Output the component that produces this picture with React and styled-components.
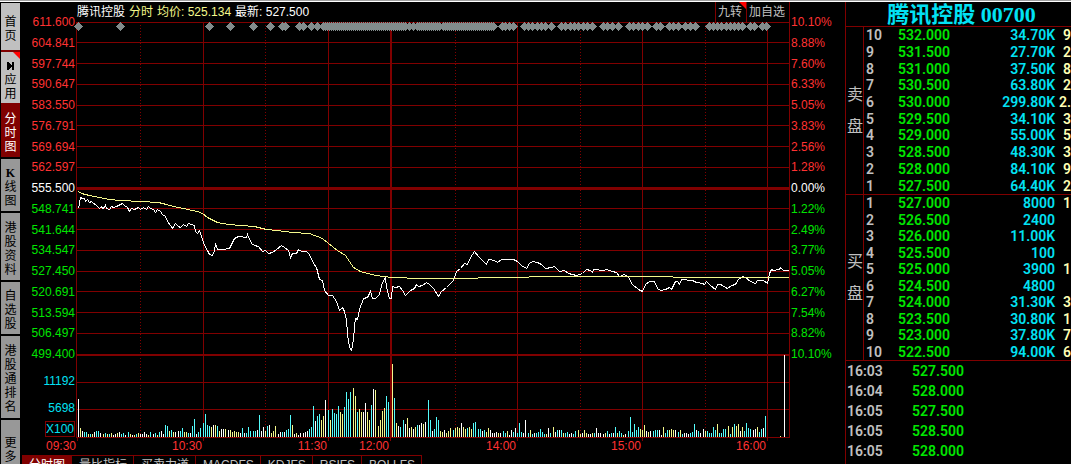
//Global imports
import React from 'react'
import styled, { createGlobalStyle } from 'styled-components'

const SANS = `"Liberation Sans", "Noto Sans CJK SC", sans-serif`
const SERIF = `"Liberation Serif", "Noto Sans CJK SC", serif`
const NUMERIC = `Roboto, "Noto Sans CJK SC", sans-serif`

const color = {
    line: '#800000',
    up: '#ff3232',
    down: '#00e600',
    flat: '#ffffff',
    cyan: '#02e2f4',
    grey: '#c0c0c0',
    yellow: '#f4f88c',
    aqua: '#54fcfc',
    marker: '#828c8c',
}

/* ---------- data ---------- */

const SIDE_TABS = [
    { id: 'home', label: '首页', height: 49, tone: 'light' },
    { id: 'apps', label: '应用', height: 53, tone: 'light', icon: true, corner: true },
    { id: 'minute', label: '分时图', height: 54, tone: 'active' },
    { id: 'kline', label: '线图', lead: 'K', height: 54, tone: 'dark' },
    { id: 'info', label: '港股资料', height: 69, tone: 'dark' },
    { id: 'watch', label: '自选股', height: 54, tone: 'dark' },
    { id: 'rank', label: '港股通排名', height: 84, tone: 'dark' },
    { id: 'more', label: '更多', height: 58, tone: 'dark' },
]

const PRICES = [
    '611.600', '604.841', '597.744', '590.647', '583.550', '576.791', '569.694', '562.597', '555.500',
    '548.741', '541.644', '534.547', '527.450', '520.691', '513.594', '506.497', '499.400',
]

const PERCENTS = [
    '10.10%', '8.88%', '7.60%', '6.33%', '5.05%', '3.83%', '2.56%', '1.28%', '0.00%',
    '1.22%', '2.49%', '3.77%', '5.05%', '6.27%', '7.54%', '8.82%', '10.10%',
]

const TIMES = ['09:30', '10:30', '11:30', '12:00', '14:00', '15:00', '16:00']

const INDICATORS = ['分时图', '量比指标', '买卖力道', 'MACDFS', 'KDJFS', 'RSIFS', 'BOLLFS']

const SELL = [
    ['10', '532.000', '34.70K', '9'],
    ['9', '531.500', '27.70K', '2'],
    ['8', '531.000', '37.50K', '8'],
    ['7', '530.500', '63.80K', '2'],
    ['6', '530.000', '299.80K', '2.'],
    ['5', '529.500', '34.10K', '3'],
    ['4', '529.000', '55.00K', '5'],
    ['3', '528.500', '48.30K', '3'],
    ['2', '528.000', '84.10K', '9'],
    ['1', '527.500', '64.40K', '2'],
]

const BUY = [
    ['1', '527.000', '8000', '1'],
    ['2', '526.500', '2400', ''],
    ['3', '526.000', '11.00K', ''],
    ['4', '525.500', '100', ''],
    ['5', '525.000', '3900', '1'],
    ['6', '524.500', '4800', ''],
    ['7', '524.000', '31.30K', '3'],
    ['8', '523.500', '30.80K', '1'],
    ['9', '523.000', '37.80K', '7'],
    ['10', '522.500', '94.00K', '6'],
]

const TICKS = [
    ['16:03', '527.500'],
    ['16:04', '528.000'],
    ['16:05', '527.500'],
    ['16:05', '528.500'],
    ['16:05', '528.000'],
]

// chart space: x 76..790, y 22..438
const ROWS = [42, 63, 84, 105, 125, 146, 167, 208, 229, 250, 271, 291, 312, 333, 382, 409]
const HOURS = [203, 328, 517, 642, 767]
const HALF_HOURS = [140, 265, 455, 580, 705]

const PRICE_LINE = `78,208 80,197 82,198 84,198 85,201 87,199 89,202 91,201 93,203 95,204 98,207 99,208 101,206
102,208 104,207 105,205 106,208 109,209 111,206 113,207 116,206 120,204 122,203 124,205 127,207 129,211 131,208
134,209 136,208 138,207 140,209 143,207 146,209 148,206 150,208 153,209 155,212 157,209 160,211 162,214 165,216
167,221 170,225 172,228 175,223 178,226 180,227 183,224 186,226 188,223 191,224 194,225 195,231 197,233 199,230
201,236 203,242 205,247 207,250 209,254 212,255 214,250 215,243 217,249 222,249 229,248 234,238 238,236 246,237
247,234 251,243 254,245 258,246 262,251 265,250 268,253 272,252 276,249 281,245 284,247 288,250 290,257 292,253
296,253 298,249 301,251 306,251 309,254 313,263 316,267 319,279 322,280 324,290 328,295 332,295 336,301 339,310
342,307 344,311 346,320 347,332 348,342 350,349 351,350 353,339 354,326 355,318 357,319 359,309 363,298 367,297
370,291 372,298 375,298 379,294 382,282 385,277 386,287 389,298 391,298 392,286 395,287 399,286 402,290 405,295
410,290 414,288 416,284 418,286 422,285 426,282 429,284 433,288 438,296 441,291 446,287 449,284 453,280 456,271
460,268 464,263 467,264 470,257 474,251 478,256 482,260 486,264 488,259 494,260 497,262 501,259 513,259 517,261
521,265 526,268 529,263 532,261 537,262 541,264 545,268 551,267 554,266 559,271 564,270 568,273 576,275 582,273
586,269 590,270 592,272 593,269 603,270 606,269 612,271 616,272 619,276 624,274 628,277 632,284 638,289 642,291
645,284 649,281 654,281 657,288 660,290 665,289 669,287 671,289 675,281 677,281 679,284 681,279 692,280 696,282
702,283 704,284 706,281 710,285 715,289 717,284 720,284 727,288 731,285 735,284 738,279 742,276 745,277 750,281
755,283 757,280 763,280 767,283 769,273 771,269 773,270 779,269 780,267 783,270 788,270`

const AVERAGE_LINE = `78,191 81,193 89,195 99,197 109,199 120,200 140,201 158,202 166,204 173,206 183,208 192,210
197,211 202,213 207,217 217,222 228,224 254,226 266,229 276,230 292,232 309,233 322,238 328,243 337,250 345,255
349,261 353,267 360,271 375,275 392,277 420,278 477,278 478,277 528,277 529,276 672,276 673,277 788,277`

// one entry a minute: bar height and its colour (w, y or c)
const VOLUME = `38w 9y 6w 5c 5c 3y 3c 3y 5w 6c 6c 4w 3y 4c 3y 3c 4y 2w 3w 4y 5w 3c 4c 2w 5c 3y 2w 2y 3c 4y
3w 3w 5w 3w 2y 5c 3w 4c 2y 5c 6w 3w 12c 11c 6y 7c 5y 5w 6w 6c 9c 5y 5y 4c 4w 11c 18c 3w 5c 9c
14c 23c 12c 11c 10y 12w 12y 11c 6y 8w 8w 8y 7w 7y 5y 6y 5y 5y 4w 9c 4w 4c 10c 6c 6c 6c 7w 22c 6w 10w
6y 11c 12w 4y 6y 11y 3w 5w 5c 5w 7c 8c 22c 12y 3w 4y 2w 4w 4w 5w 6w 8c 10c 31c 16w 21c 23c 17y 21y 37w
27c 17y 28c 24c 23c 31c 25y 23y 30c 45c 38c 45c 49y 41y 25c 28y 25y 25w 34w 25y 17y 32c 48w 47y 11y 17y 26y 29y 41c 35c
0w 73y 39c 14y 11w 10c 17c 13w 19y 9w 10y 8w 10y 12c 12w 14w 13y 15w 37c 17c 6w 8c 20c 17c 6y 5y 7w 4y 6y 9y
7c 9y 10y 9y 14w 10y 8y 9c 10y 8y 14c 15c 8c 8c 6w 7c 5y 9y 7w 4w 4w 5w 4y 4w 6c 4c 6y 2w 7w 5c
9w 4c 14c 5c 4w 17w 4c 7y 3c 4w 4c 5c 8c 5c 3c 3y 9w 4c 10y 5w 7c 7w 7c 4y 4c 5c 3w 4w 3c 6c
7y 3y 4w 7y 4y 3w 3w 4y 4c 9w 4w 4w 3w 4y 6c 3w 4c 4w 10c 4y 6c 4c 2y 3w 6c 20c 5c 13c 7c 10c
8y 7y 12y 6w 5y 6w 6c 7c 7c 7w 2w 10y 4c 7c 7y 8y 7y 7w 5c 7y 3c 4w 4w 3w 4c 5c 13c 7w 6c 4w
8w 6y 6c 4c 4c 10c 7c 13y 4c 4c 8c 8c 11y 3c 10y 13c 11y 13y 6w 10y 6c 14c 9c 8c 7w 8w 10y 5c 8c 9w
21c`.split(/\s+/)

const range = (from, to, step) => {
    const out = []
    for (let x = from; x <= to; x += step) out.push(x)
    return out
}

const MARKERS = [
    78, 120, 209, 230, 253, 270, 282, 285, 299, 303, 311, 317,
    ...range(323, 405, 2), 409, 413, ...range(417, 439, 2), ...range(443, 493, 2), 502, 505, 509, 513,
    524, 528, 532, 537, 541, 545, 551, 561, 565, 570, 574, 578, 583, 587, 592, 603, 607, 612, 618,
    629, 633, 638, 642, 647, 656, 660, 669, 673, 678, 685, 690, 695,
    709, 713, 717, 721, 726, 730, 734, 738, 742, 750, 754, 762, 766,
]

/* ---------- styles ---------- */

const GlobalStyle = createGlobalStyle`
    * {
        box-sizing: border-box;
    }
    body {
        margin: 0;
        background: #000;
        overflow: hidden;
    }
`

const Page = styled.div`
    height: 100vh;
    overflow: hidden;
    display: flex;
    flex-direction: column;
    border-top: 1px solid #a0a0a0;
    background: #000;
    font-family: ${SANS};
    font-size: 12px;
`

const Content = styled.div`
    flex: 1;
    min-height: 0;
    display: flex;
    border-top: 1px solid #fff;
`

const Sidebar = styled.nav`
    width: 20px;
    flex: none;
    display: flex;
    flex-direction: column;
    padding: 1px 0 0 1px;
`

const tones = {
    light: { background: '#c0c0c0', text: '#000', edge: color.line },
    dark: { background: '#989898', text: '#000', edge: '#000' },
    active: { background: color.line, text: '#fff', edge: '#000' },
}

const SideTab = styled.button`
    position: relative;
    flex: none;
    height: ${props => props.$height}px;
    width: 100%;
    display: flex;
    flex-direction: column;
    align-items: center;
    justify-content: center;
    padding: 4px 0 0;
    border: none;
    border-bottom: 2px solid ${props => tones[props.$tone].edge};
    background: ${props => tones[props.$tone].background};
    color: ${props => tones[props.$tone].text};
    font-family: ${SANS};
    font-size: 12px;
    line-height: 14px;
    cursor: pointer;
`

const SideText = styled.span`
    width: 12px;
    word-break: break-all;
`

const SideLead = styled.span`
    font-family: ${SERIF};
    font-weight: bold;
`

const SideIcon = styled.svg`
    width: 8px;
    height: 14px;
`

const Corner = styled.span`
    position: absolute;
    top: 0;
    right: 0;
    border-style: solid;
    border-width: 0 7px 7px 0;
    border-color: transparent #ff0000 transparent transparent;
`

const Main = styled.main`
    flex: 1;
    min-width: 0;
    display: flex;
    flex-direction: column;
`

const ChartArea = styled.section`
    display: grid;
    grid-template-columns: 56px 1fr 55px;
`

const Axis = styled.div`
    display: flex;
    flex-direction: column;
    padding: 11px 1px 0;
    line-height: 18px;
    text-align: ${props => props.$align};
`

const Scale = styled.div`
    height: 350px;
    display: flex;
    flex-direction: column;
    justify-content: space-between;
`

const ScaleLabel = styled.span`
    color: ${props => props.$color};
`

const VolumeLabel = styled.span`
    color: ${color.cyan};
    margin-top: 9px;
`

const UnitBox = styled.span`
    align-self: flex-end;
    margin-top: 4px;
    height: 16px;
    line-height: 15px;
    border: 1px solid ${color.line};
    color: ${color.cyan};
`

const Plot = styled.div`
    display: flex;
    flex-direction: column;
`

const PlotHeader = styled.header`
    height: 20px;
    display: flex;
    align-items: center;
    justify-content: space-between;
    padding-left: 1px;
    line-height: 20px;
    white-space: nowrap;
    border-right: 1px solid ${color.line};
`

const Quotes = styled.div`
    display: flex;
    gap: 4px;
`

const Quote = styled.span`
    color: ${props => props.$color};
`

const HeaderActions = styled.div`
    display: flex;
`

const HeaderButton = styled.button`
    position: relative;
    height: 20px;
    padding: 0 4px 0 2px;
    border: none;
    border-left: 1px solid ${color.line};
    background: none;
    color: ${color.grey};
    font-family: ${SANS};
    font-size: 12px;
    line-height: 20px;
    cursor: pointer;
`

const ChartSvg = styled.svg`
    display: block;
    width: 100%;
    height: 416px;
    overflow: visible;
`

const TimeAxis = styled.div`
    display: grid;
    grid-template-columns: 56px 126fr 125fr 62fr 127fr 125fr 125fr 24fr 55px;
    height: 17px;
    line-height: 17px;
    color: ${color.up};
    text-align: right;
`

const IndicatorTabs = styled.div`
    display: flex;
    padding-left: 2px;
`

const IndicatorTab = styled.button`
    height: 20px;
    padding: 0 6px 0 7px;
    border: 1px solid ${color.line};
    border-left: none;
    background: ${props => props.$active ? color.line : 'none'};
    color: ${props => props.$active ? '#fff' : color.grey};
    font-family: ${SANS};
    font-size: 12px;
    line-height: 16px;
    white-space: nowrap;
    cursor: pointer;
`

const Panel = styled.aside`
    width: 226px;
    flex: none;
    border-left: 1px solid ${color.line};
    font-family: ${NUMERIC};
    font-size: 14px;
    font-weight: 600;
    color: ${color.grey};
`

const PanelTitle = styled.h1`
    margin: 0;
    height: 25px;
    padding-left: 6px;
    line-height: 26px;
    border-bottom: 1px solid ${color.line};
    color: ${color.cyan};
    font-family: ${SERIF};
    font-size: 22px;
    font-weight: bold;
    text-align: center;
    white-space: nowrap;
`

const BookSection = styled.section`
    display: flex;
    border-bottom: 1px solid ${color.line};
`

const BookSide = styled.h2`
    margin: 0;
    width: 18px;
    flex: none;
    display: flex;
    align-items: center;
    padding-left: 1px;
    border-right: 1px solid ${color.line};
    font-size: 16px;
    font-weight: normal;
    line-height: 32px;
    word-break: break-all;
`

const BookTable = styled.table`
    flex: 1;
    height: ${props => props.$height}px;
    table-layout: fixed;
    border-collapse: collapse;
    line-height: 16px;
`

const Cell = styled.td`
    width: ${props => props.$width || 'auto'};
    padding: 0 0 0 ${props => props.$indent || 0}px;
    color: ${props => props.$color || color.grey};
    text-align: ${props => props.$align || 'left'};
    white-space: nowrap;
`

const TickTable = styled.table`
    border-collapse: collapse;
    line-height: 20px;
`

/* ---------- components ---------- */

const scaleColor = (i) => {
    if (i === 8) return color.flat
    return i < 8 ? color.up : color.down
}

const barColor = { w: '#fff', y: color.yellow, c: color.aqua }

const Chart = () => (
    <ChartSvg viewBox="76 22 714 416" preserveAspectRatio="none" shapeRendering="crispEdges">
        <g fill={color.line}>
            <rect x="76" y="22" width="714" height="1" />
            {ROWS.map(y => <rect key={y} x="76" y={y} width="714" height="1" />)}
            <rect x="76" y="187" width="714" height="3" />
            <rect x="76" y="354" width="714" height="2" />
            <rect x="76" y="437" width="714" height="1" />
            <rect x="76" y="22" width="1" height="416" />
            <rect x="789" y="22" width="1" height="416" />
            {HOURS.map(x => <rect key={x} x={x} y="22" width="1" height="419" />)}
            <rect x="390" y="22" width="2" height="416" />
            <rect x="77" y="438" width="1" height="3" />
            <rect x="390" y="438" width="1" height="3" />
        </g>
        <g fill={color.line}>
            {HALF_HOURS.map(x => (
                <path key={x} d={range(25, 436, 3).map(y => `M${x} ${y}h1v1h-1z`).join('')} />
            ))}
        </g>
        <g fill={color.marker}>
            {MARKERS.map(x => (
                <path key={x} d={`M${x - 4} 26h1v-1h1v-1h1v-1h1v-1h1v1h1v1h1v1h1v1h1v1h-1v1h-1v1h-1v1h-1v1h-1v-1h-1v-1h-1v-1h-1v-1h-1z`} />
            ))}
        </g>
        {VOLUME.map((bar, i) => {
            const height = parseInt(bar, 10)
            return <rect
                key={i}
                x={78 + Math.floor(i * 125 / 60)}
                y={437 - height}
                width="1"
                height={height}
                fill={barColor[bar.slice(-1)]}
            />
        })}
        <rect x="780" y="436" width="1" height="1" fill={color.yellow} />
        <rect x="784" y="355" width="1" height="82" fill="#fff" />
        <g fill="none" transform="translate(.5 .5)">
            <polyline points={PRICE_LINE} stroke="#fff" />
            <polyline points={AVERAGE_LINE} stroke={color.yellow} />
        </g>
    </ChartSvg>
)

const Book = ({ title, rows, height }) => (
    <BookSection>
        <BookSide>{title}</BookSide>
        <BookTable $height={height}>
            <tbody>
                {rows.map(([level, price, volume, extra]) => (
                    <tr key={level}>
                        <Cell $width="34px" $indent={2}>{level}</Cell>
                        <Cell $width="60px" $color={color.down}>{price}</Cell>
                        <Cell $align="right" $color={color.cyan}>{volume}</Cell>
                        <Cell $width="16px" $align="right" $color="#ffffb4">{extra}</Cell>
                    </tr>
                ))}
            </tbody>
        </BookTable>
    </BookSection>
)

const App = () => {
    return (
        <Page>
            <GlobalStyle />
            <Content>
                <Sidebar>
                    {SIDE_TABS.map(tab => (
                        <SideTab key={tab.id} $height={tab.height} $tone={tab.tone}>
                            {tab.icon && (
                                <SideIcon viewBox="0 0 8 14" shapeRendering="crispEdges">
                                    <path d="M0 3h2v1h1v1h1v1h1v-3h2v8h-2v-3h-1v1h-1v1h-1v1h-2z" />
                                </SideIcon>
                            )}
                            {tab.lead && <SideLead>{tab.lead}</SideLead>}
                            <SideText>{tab.label}</SideText>
                            {tab.corner && <Corner />}
                        </SideTab>
                    ))}
                </Sidebar>

                <Main>
                    <ChartArea>
                        <Axis $align="right">
                            <Scale>
                                {PRICES.map((price, i) => (
                                    <ScaleLabel key={i} $color={scaleColor(i)}>{price}</ScaleLabel>
                                ))}
                            </Scale>
                            <VolumeLabel>11192</VolumeLabel>
                            <VolumeLabel>5698</VolumeLabel>
                            <UnitBox>X100</UnitBox>
                        </Axis>
                        <Plot>
                            <PlotHeader>
                                <Quotes>
                                    <Quote $color="#fff">腾讯控股</Quote>
                                    <Quote $color={color.yellow}>分时</Quote>
                                    <Quote $color={color.yellow}>均价: 525.134</Quote>
                                    <Quote $color="#fff">最新: 527.500</Quote>
                                </Quotes>
                                <HeaderActions>
                                    <HeaderButton>九转<Corner /></HeaderButton>
                                    <HeaderButton>加自选</HeaderButton>
                                </HeaderActions>
                            </PlotHeader>
                            <Chart />
                        </Plot>
                        <Axis $align="left">
                            <Scale>
                                {PERCENTS.map((percent, i) => (
                                    <ScaleLabel key={i} $color={scaleColor(i)}>{percent}</ScaleLabel>
                                ))}
                            </Scale>
                        </Axis>
                    </ChartArea>
                    <TimeAxis>
                        {TIMES.map(time => <span key={time}>{time}</span>)}
                    </TimeAxis>
                    <IndicatorTabs>
                        {INDICATORS.map((name, i) => (
                            <IndicatorTab key={name} $active={i === 0}>{name}</IndicatorTab>
                        ))}
                    </IndicatorTabs>
                </Main>

                <Panel>
                    <PanelTitle>腾讯控股 00700</PanelTitle>
                    <Book title="卖盘" rows={SELL} height={167} />
                    <Book title="买盘" rows={BUY} height={165} />
                    <TickTable>
                        <tbody>
                            {TICKS.map(([time, price], i) => (
                                <tr key={i}>
                                    <Cell $width="66px" $indent={1}>{time}</Cell>
                                    <Cell $color={color.down}>{price}</Cell>
                                </tr>
                            ))}
                        </tbody>
                    </TickTable>
                </Panel>
            </Content>
        </Page>
    )
}

export default App
